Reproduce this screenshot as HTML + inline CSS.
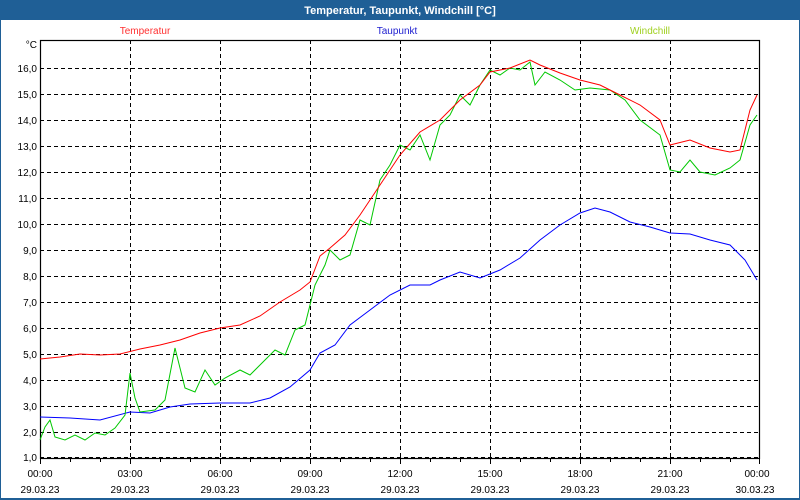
<!DOCTYPE html>
<html><head><style>
html,body{margin:0;padding:0;background:#fff;}
body{width:800px;height:500px;overflow:hidden;position:relative;font-family:"Liberation Sans",sans-serif;}
</style></head><body>
<svg width="800" height="500" xmlns="http://www.w3.org/2000/svg" style="position:absolute;left:0;top:0">
<rect x="0" y="0" width="800" height="500" fill="#1f5f96"/>
<rect x="1" y="20" width="798" height="478" fill="#fff"/>
<text x="400" y="14" fill="#fff" font-size="11" font-weight="bold" text-anchor="middle" font-family="Liberation Sans, sans-serif">Temperatur, Taupunkt, Windchill [°C]</text>
<g font-size="10" font-family="Liberation Sans, sans-serif" text-anchor="middle">
<text x="145" y="34" fill="#ff3030">Temperatur</text>
<text x="397" y="34" fill="#2020d0">Taupunkt</text>
<text x="650" y="34" fill="#a0d020">Windchill</text>
</g>
<g stroke="#000" stroke-width="1" stroke-dasharray="4,3" fill="none">
<path d="M130.5 40V458M220.5 40V458M310.5 40V458M400.5 40V458M490.5 40V458M580.5 40V458M670.5 40V458"/>
<path d="M40 68.5H760M40 94.5H760M40 120.5H760M40 146.5H760M40 172.5H760M40 198.5H760M40 224.5H760M40 250.5H760M40 276.5H760M40 302.5H760M40 328.5H760M40 354.5H760M40 380.5H760M40 406.5H760M40 432.5H760M40 457.5H760"/>
</g>
<rect x="40.5" y="40.5" width="719" height="418" fill="none" stroke="#000" stroke-width="1.2"/>
<g stroke="#000"><path d="M40.5 458V464M70.5 458V462M100.5 458V462M130.5 458V464M160.5 458V462M190.5 458V462M220.5 458V464M250.5 458V462M280.5 458V462M310.5 458V464M340.5 458V462M370.5 458V462M400.5 458V464M430.5 458V462M460.5 458V462M490.5 458V464M520.5 458V462M550.5 458V462M580.5 458V464M610.5 458V462M640.5 458V462M670.5 458V464M700.5 458V462M730.5 458V462M759.5 458V464"/></g>
<g font-size="10" font-family="Liberation Sans, sans-serif" text-anchor="end" fill="#000">
<text x="37" y="48">°C</text>
<text x="37" y="72">16,0</text><text x="37" y="98">15,0</text><text x="37" y="124">14,0</text><text x="37" y="150">13,0</text><text x="37" y="176">12,0</text><text x="37" y="202">11,0</text><text x="37" y="228">10,0</text><text x="37" y="254">9,0</text><text x="37" y="280">8,0</text><text x="37" y="306">7,0</text><text x="37" y="332">6,0</text><text x="37" y="358">5,0</text><text x="37" y="384">4,0</text><text x="37" y="410">3,0</text><text x="37" y="436">2,0</text><text x="37" y="461">1,0</text>
</g>
<g font-size="10" font-family="Liberation Sans, sans-serif" text-anchor="middle" fill="#000">
<text x="40" y="477">00:00</text><text x="130" y="477">03:00</text><text x="220" y="477">06:00</text><text x="310" y="477">09:00</text><text x="400" y="477">12:00</text><text x="490" y="477">15:00</text><text x="580" y="477">18:00</text><text x="670" y="477">21:00</text><text x="757" y="477">00:00</text>
<text x="40" y="493">29.03.23</text><text x="130" y="493">29.03.23</text><text x="220" y="493">29.03.23</text><text x="310" y="493">29.03.23</text><text x="400" y="493">29.03.23</text><text x="490" y="493">29.03.23</text><text x="580" y="493">29.03.23</text><text x="670" y="493">29.03.23</text><text x="755" y="493">30.03.23</text>
</g>
<polyline fill="none" stroke="#0000ff" stroke-width="1" points="40,417 70,418 100,420 130,412 150,413 170,407 190,404 220,403 250,403 270,398 290,387 310,370 320,353 335,345 350,325 370,310 390,295 410,285 430,285 440,280 460,272 480,278 500,270 520,258 540,240 560,225 580,213 595,208 610,212 630,222 650,227 670,233 690,234 710,240 730,245 745,260 757,280"/>
<polyline fill="none" stroke="#00c800" stroke-width="1" points="40,440 45,427 50,420 55,437 65,440 75,435 85,440 95,433 105,435 115,428 125,415 130,373 135,398 140,412 155,410 165,400 175,348 185,388 195,392 205,370 215,385 225,378 240,370 250,375 260,365 275,350 285,355 295,330 305,325 315,285 325,265 330,250 340,260 350,255 360,220 370,225 380,180 390,165 400,145 410,150 420,135 430,160 440,125 450,115 460,95 470,105 480,85 490,70 500,75 510,68 520,70 530,62 535,85 545,72 560,80 575,90 590,88 610,90 625,100 640,120 660,135 670,170 680,172 690,160 700,172 715,175 730,168 740,160 750,125 757,115"/>
<polyline fill="none" stroke="#ff0000" stroke-width="1" points="40,359 60,357 80,354 100,355 120,354 140,349 160,345 180,340 200,333 220,328 240,325 260,316 280,302 300,290 310,282 320,256 330,248 345,235 360,215 380,185 400,155 420,132 440,120 460,100 480,85 490,72 510,68 530,60 540,65 560,73 580,80 600,85 620,95 640,105 660,120 670,145 690,140 710,148 730,152 740,150 750,110 757,95"/>
</svg>
</body></html>
